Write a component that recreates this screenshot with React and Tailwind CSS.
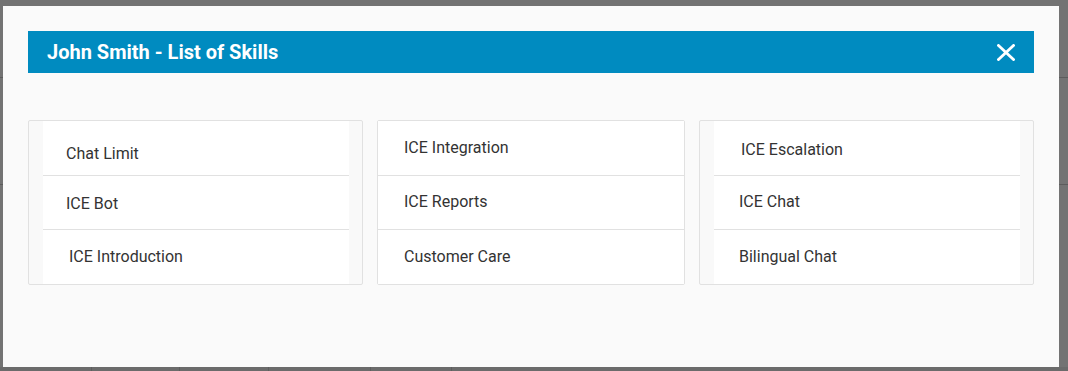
const columns = [
  {
    width: 'w-[335px]',
    inset: true,
    items: [
      { label: 'Chat Limit', cls: 'pl-[23px] pt-[11px]' },
      { label: 'ICE Bot', cls: 'pl-[23px] pt-[2px]' },
      { label: 'ICE Introduction', cls: 'pl-[26px] pt-0' },
    ],
  },
  {
    width: 'w-[308px]',
    inset: false,
    items: [
      { label: 'ICE Integration', cls: 'pl-[26px] pt-0' },
      { label: 'ICE Reports', cls: 'pl-[26px] pb-[2px]' },
      { label: 'Customer Care', cls: 'pl-[26px] pt-0' },
    ],
  },
  {
    width: 'w-[335px]',
    inset: true,
    items: [
      { label: 'ICE Escalation', cls: 'pl-[27px] pt-[4px]' },
      { label: 'ICE Chat', cls: 'pl-[25px] pb-[2px]' },
      { label: 'Bilingual Chat', cls: 'pl-[25px] pt-0' },
    ],
  },
];

const rowHeights = ['h-[55px]', 'h-[54px]', 'h-[54px]'];

function CloseIcon() {
  return (
    <svg width="18" height="17" viewBox="0 0 18 17" className="block">
      <path d="M1.5 1.5 L16.5 15.5 M16.5 1.5 L1.5 15.5" stroke="#ffffff" strokeWidth="2.8" strokeLinecap="square" />
    </svg>
  );
}

function SkillCard({ col }) {
  return (
    <div className={`${col.width} border border-[#e1e1e1] rounded-[2px] bg-[#f9f9f9] ${col.inset ? 'pl-[14px] pr-[13px]' : ''}`}>
      <div className="bg-white flex flex-col">
        {col.items.map((item, i) => (
          <div
            key={item.label}
            className={`${rowHeights[i]} flex items-center ${item.cls} ${i < col.items.length - 1 ? 'border-b border-[#e1e1e1]' : ''}`}
          >
            <span className="text-[16px] text-[#333333] leading-none">{item.label}</span>
          </div>
        ))}
      </div>
    </div>
  );
}

export default function App() {
  return (
    <div className="relative w-[1068px] h-[371px] overflow-hidden bg-[#737373] font-['Roboto','Liberation_Sans',sans-serif]">
      {/* page behind the overlay */}
      <div className="h-[78px] border-b border-[#5c5c5c]" />
      <div className="h-[107px] border-b border-[#5c5c5c]" />
      <div className="h-[182px]" />
      <div className="flex h-[4px] bg-[#6b6b6b]">
        <div className="w-[92px] border-r border-[#5e5e5e]" />
        <div className="w-[88px] border-r border-[#5e5e5e]" />
        <div className="w-[89px] border-r border-[#5e5e5e]" />
        <div className="w-[102px] border-r border-[#5e5e5e]" />
        <div className="w-[81px] border-r border-[#5e5e5e]" />
      </div>

      {/* modal */}
      <div className="absolute left-[3px] top-[6px] w-[1056px] h-[361px] bg-[#fafafa] pl-[25px] pr-[25px] pt-[25px]">
        <div className="h-[42px] bg-[#008bc0] flex items-center justify-between pl-[19px] pr-[19px]">
          <h2 className="text-white font-bold text-[20px] leading-none">John Smith - List of Skills</h2>
          <CloseIcon />
        </div>
        <div className="mt-[47px] flex gap-[14px]">
          {columns.map((col, i) => (
            <SkillCard key={i} col={col} />
          ))}
        </div>
      </div>
    </div>
  );
}
